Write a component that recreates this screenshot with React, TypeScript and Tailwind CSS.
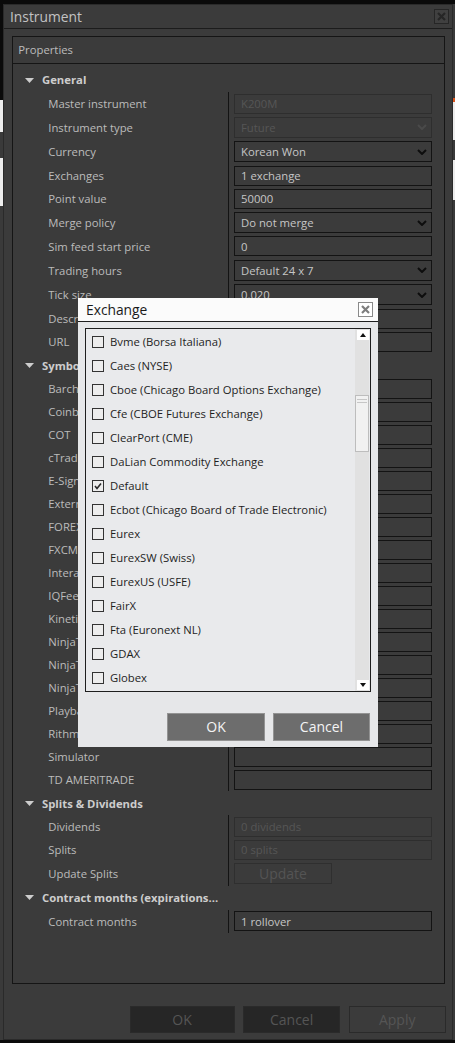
import React from "react";

type Row =
  | { kind: "header"; label: string }
  | { kind: "text"; label: string; value?: string; disabled?: boolean }
  | { kind: "combo"; label: string; value: string; disabled?: boolean }
  | { kind: "button"; label: string; value: string };

const symbolMap = [
  "Barchart",
  "Coinbase",
  "COT",
  "cTrader",
  "E-Signal",
  "External",
  "FOREX.com",
  "FXCM",
  "Interactive Brokers",
  "IQFeed",
  "Kinetick",
  "NinjaTrader (Continuum)",
  "NinjaTrader (Rithmic)",
  "NinjaTrader (Tradovate)",
  "Playback",
  "Rithmic",
  "Simulator",
  "TD AMERITRADE",
];

const rows: Row[] = [
  { kind: "header", label: "General" },
  { kind: "text", label: "Master instrument", value: "K200M", disabled: true },
  { kind: "combo", label: "Instrument type", value: "Future", disabled: true },
  { kind: "combo", label: "Currency", value: "Korean Won" },
  { kind: "text", label: "Exchanges", value: "1 exchange" },
  { kind: "text", label: "Point value", value: "50000" },
  { kind: "combo", label: "Merge policy", value: "Do not merge" },
  { kind: "text", label: "Sim feed start price", value: "0" },
  { kind: "combo", label: "Trading hours", value: "Default 24 x 7" },
  { kind: "combo", label: "Tick size", value: "0.020" },
  { kind: "text", label: "Description", value: "" },
  { kind: "text", label: "URL", value: "" },
  { kind: "header", label: "Symbol map" },
  ...symbolMap.map((l) => ({ kind: "text" as const, label: l, value: "" })),
  { kind: "header", label: "Splits & Dividends" },
  { kind: "text", label: "Dividends", value: "0 dividends", disabled: true },
  { kind: "text", label: "Splits", value: "0 splits", disabled: true },
  { kind: "button", label: "Update Splits", value: "Update" },
  { kind: "header", label: "Contract months (expirations..." },
  { kind: "text", label: "Contract months", value: "1 rollover" },
];

const exchanges: { name: string; checked?: boolean }[] = [
  { name: "Bvme (Borsa Italiana)" },
  { name: "Caes (NYSE)" },
  { name: "Cboe (Chicago Board Options Exchange)" },
  { name: "Cfe (CBOE Futures Exchange)" },
  { name: "ClearPort (CME)" },
  { name: "DaLian Commodity Exchange" },
  { name: "Default", checked: true },
  { name: "Ecbot (Chicago Board of Trade Electronic)" },
  { name: "Eurex" },
  { name: "EurexSW (Swiss)" },
  { name: "EurexUS (USFE)" },
  { name: "FairX" },
  { name: "Fta (Euronext NL)" },
  { name: "GDAX" },
  { name: "Globex" },
];

function Chevron({ disabled }: { disabled?: boolean }) {
  return (
    <svg width="10" height="6" viewBox="0 0 10 6" className="shrink-0">
      <path
        d="M1 1 L5 5 L9 1"
        fill="none"
        stroke={disabled ? "#4a4a4a" : "#0d0d0d"}
        strokeWidth="2"
      />
    </svg>
  );
}

function PropRow({ row }: { row: Row }) {
  if (row.kind === "header") {
    return (
      <div className="flex h-[24px] shrink-0 items-center pl-[12.3px]">
        <svg width="9" height="5" viewBox="0 0 9 5" className="shrink-0">
          <path d="M0 0 L9 0 L4.5 5 Z" fill="#cdcdcd" />
        </svg>
        <span className="ml-[8px] whitespace-nowrap text-[11.3px] font-bold leading-none text-[#cdcdcd]">
          {row.label}
        </span>
      </div>
    );
  }
  const tall = row.kind === "combo" || row.kind === "button";
  return (
    <div className={`flex shrink-0 ${tall ? "h-[24.67px]" : "h-[23px]"}`}>
      <div className="flex w-[215.3px] shrink-0 items-center overflow-hidden whitespace-nowrap pl-[35.6px] text-[11.3px] leading-none text-[#bcbcbc]">
        {row.label}
      </div>
      <div className="flex flex-1 items-center border-l border-[#131313] pl-[5px]">
        {row.kind === "button" ? (
          <div className="flex h-[21px] w-[98px] items-center justify-center border border-[#2f2f2f] text-[14px] leading-none text-[#545454]">
            {row.value}
          </div>
        ) : (
          <div
            className={`flex w-[198px] items-center justify-between pl-[6px] pr-[4px] text-[11.3px] leading-none ${
              row.kind === "combo" ? "h-[21px]" : "h-[20px]"
            } ${
              row.disabled
                ? "border border-[#2e2e2e] text-[#565656]"
                : "border border-[#131313] text-[#c6c6c6]"
            }`}
          >
            <span className="whitespace-nowrap">{row.value}</span>
            {row.kind === "combo" && <Chevron disabled={row.disabled} />}
          </div>
        )}
      </div>
    </div>
  );
}

function DarkClose() {
  return (
    <div className="flex h-[15px] w-[15px] items-center justify-center border border-[#262626] bg-[#404040]">
      <svg width="9" height="9" viewBox="0 0 9 9">
        <path d="M1 1 L8 8 M8 1 L1 8" stroke="#262626" strokeWidth="2.2" />
      </svg>
    </div>
  );
}

function LightClose() {
  return (
    <div className="flex h-[15px] w-[15px] items-center justify-center border border-[#8a8a8a] bg-white">
      <svg width="9" height="9" viewBox="0 0 9 9">
        <path d="M1 1 L8 8 M8 1 L1 8" stroke="#7d7d7d" strokeWidth="2.2" />
      </svg>
    </div>
  );
}

function Window() {
  return (
    <div className="flex h-full w-[450px] shrink-0 flex-col border border-[#2a2a2a] bg-[#3b3b3b]">
      <div className="flex h-[24px] shrink-0 items-center justify-between border-b border-[#1c1c1c] pl-[6px] pr-[3px]">
        <span className="text-[13.8px] leading-none text-[#c2c2c2]">Instrument</span>
        <DarkClose />
      </div>
      <div className="ml-[7.7px] mt-[7px] flex h-[948px] w-[433px] shrink-0 flex-col border border-[#151515]">
        <div className="flex h-[27px] shrink-0 items-center border-b border-[#151515] pl-[5.6px] text-[11.3px] leading-none text-[#bcbcbc]">
          Properties
        </div>
        <div className="flex flex-col pt-[4px]">
          {rows.map((r, i) => (
            <PropRow key={i} row={r} />
          ))}
        </div>
      </div>
      <div className="mt-[22px] flex shrink-0 justify-end gap-[8.6px] pr-[6.3px]">
        <div className="flex h-[27px] w-[105px] items-center justify-center border border-[#2a2a2a] bg-[#262626] text-[14px] leading-none text-[#555555]">
          OK
        </div>
        <div className="flex h-[27px] w-[97px] items-center justify-center border border-[#2a2a2a] bg-[#262626] text-[14px] leading-none text-[#555555]">
          Cancel
        </div>
        <div className="flex h-[27px] w-[97px] items-center justify-center border border-[#2a2a2a] bg-[#3b3b3b] text-[14px] leading-none text-[#555555]">
          Apply
        </div>
      </div>
    </div>
  );
}

function Checkbox({ checked }: { checked?: boolean }) {
  return (
    <div className="flex h-[12px] w-[12px] shrink-0 items-center justify-center border border-[#333333] bg-[#ededed]">
      {checked && (
        <svg width="10" height="10" viewBox="0 0 10 10">
          <path d="M2 5 L4 7.5 L8 2.5" fill="none" stroke="#2a2a2a" strokeWidth="1.6" />
        </svg>
      )}
    </div>
  );
}

function ExchangeDialog() {
  return (
    <div className="absolute left-[78px] top-[298px] flex h-[449px] w-[300px] flex-col bg-[#e6e7e9]">
      <div className="flex h-[24px] shrink-0 items-center justify-between border-b border-[#1e1e1e] bg-[#fbfbfb] pl-[8px] pr-[5px]">
        <span className="text-[13.8px] leading-none text-[#1a1a1a]">Exchange</span>
        <LightClose />
      </div>
      <div className="mx-[7px] mt-[6px] flex h-[364px] shrink-0 border border-[#1e1e1e] bg-[#e9eaec]">
        <div className="flex flex-1 flex-col pt-[1px]">
          {exchanges.map((e) => (
            <div key={e.name} className="flex h-[24px] shrink-0 items-center gap-[6px] pl-[6px]">
              <Checkbox checked={e.checked} />
              <span className="whitespace-nowrap text-[11.3px] leading-none text-[#1e1e1e]">
                {e.name}
              </span>
            </div>
          ))}
        </div>
        <div className="mr-[1px] flex w-[14px] shrink-0 flex-col bg-[#e1e1e1]">
          <div className="ml-[2px] mt-[1px] flex h-[10px] w-[12px] items-center justify-center bg-white">
            <svg width="6" height="4" viewBox="0 0 6 4">
              <path d="M0 4 L3 0 L6 4 Z" fill="#111" />
            </svg>
          </div>
          <div className="mt-[55px] flex h-[57px] w-[14px] flex-col items-center border border-[#bdbdbd] bg-[#f1f1f1] pt-[3px]">
            <div className="h-[1px] w-[10px] bg-[#c6c6c6]" />
            <div className="mt-[2px] h-[1px] w-[10px] bg-[#c6c6c6]" />
          </div>
          <div className="flex-1" />
          <div className="mb-[1px] ml-[2px] flex h-[10px] w-[12px] items-center justify-center bg-white">
            <svg width="6" height="4" viewBox="0 0 6 4">
              <path d="M0 0 L6 0 L3 4 Z" fill="#111" />
            </svg>
          </div>
        </div>
      </div>
      <div className="mt-[21px] flex shrink-0 justify-end gap-[8px] pr-[8px]">
        <div className="flex h-[28px] w-[98px] items-center justify-center border border-[#939393] bg-[#6d6d6d] text-[14px] leading-none text-[#f4f4f4]">
          OK
        </div>
        <div className="flex h-[28px] w-[97px] items-center justify-center border border-[#939393] bg-[#6d6d6d] text-[14px] leading-none text-[#f4f4f4]">
          Cancel
        </div>
      </div>
    </div>
  );
}

function SideStrip({ side }: { side: "left" | "right" }) {
  if (side === "left") {
    return (
      <div className="flex w-[3px] shrink-0 flex-col">
        <div className="h-[96px] bg-[#0a0a0a]" />
        <div className="h-[32px] bg-[#ededed]" />
        <div className="h-[26px] bg-[#3a3a3a]" />
        <div className="h-[48px] bg-[#ededed]" />
        <div className="flex-1 bg-[#3a3a3a]" />
      </div>
    );
  }
  return (
    <div className="flex w-[2px] shrink-0 flex-col">
      <div className="h-[94px] bg-[#3a3a3a]" />
      <div className="h-[4px] bg-[#d9541e]" />
      <div className="h-[38px] bg-[#ededed]" />
      <div className="h-[20px] bg-[#3a3a3a]" />
      <div className="h-[40px] bg-[#ededed]" />
      <div className="flex-1 bg-[#3a3a3a]" />
    </div>
  );
}

export default function App() {
  return (
    <div className="relative h-[1043px] w-[455px] overflow-hidden bg-[#0a0a0a] font-['Open_Sans',sans-serif]">
      <div className="h-[4px] bg-[#0a0a0a]" />
      <div className="flex h-[1036px]">
        <SideStrip side="left" />
        <Window />
        <SideStrip side="right" />
      </div>
      <ExchangeDialog />
    </div>
  );
}
